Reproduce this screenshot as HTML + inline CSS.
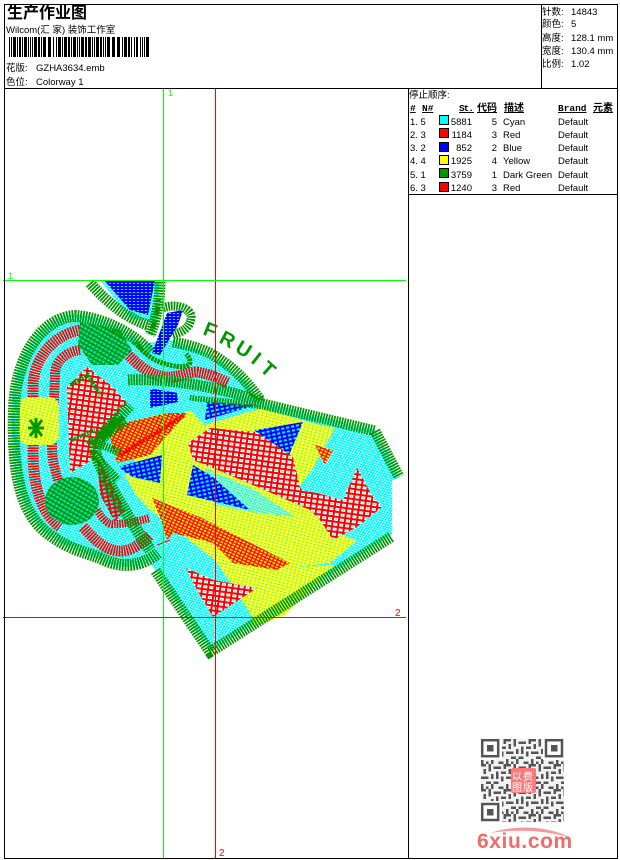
<!DOCTYPE html>
<html><head><meta charset="utf-8"><title>生产作业图</title>
<style>
html,body{margin:0;padding:0;background:#fff;width:620px;height:860px;overflow:hidden}
svg{display:block;position:absolute;left:0;top:0}
text{font-family:"Liberation Sans","WenQuanYi Zen Hei","Noto Sans CJK SC",sans-serif;font-size:9.5px;fill:#000}
.h{font-family:"Liberation Mono","WenQuanYi Zen Hei","Noto Sans CJK SC",monospace;font-weight:bold;font-size:9.5px}
.f{fill:none}
.g{fill:none;stroke:#009600;stroke-dasharray:1.7 1}
.k{fill:none;stroke:#009600;stroke-dasharray:2.5 .8}
.r{fill:none;stroke:#f00;stroke-dasharray:1.6 1}
.m{fill:none;stroke:#f00;stroke-dasharray:2.5 .8}
.q{font-size:10px;fill:#fff;font-family:"WenQuanYi Zen Hei","Noto Sans CJK SC",sans-serif}
.fr{font-size:20px;font-weight:bold;fill:#009600}
</style></head><body>
<svg width="620" height="860" viewBox="0 0 620 860" xmlns="http://www.w3.org/2000/svg">
<defs>
<pattern id="pc" width="4" height="3" patternUnits="userSpaceOnUse" patternTransform="rotate(-20)"><rect width="4" height="3" fill="#00ffff"/><rect x="0" y="0" width="2" height="1" fill="#fff"/><rect x="2" y="1.5" width="1.5" height="1" fill="#fff"/></pattern>
<pattern id="py" width="4" height="3" patternUnits="userSpaceOnUse" patternTransform="rotate(15)"><rect width="4" height="3" fill="#ffff00"/><rect x="0" y="0" width="1.5" height="1" fill="#00ffff"/><rect x="2" y="1.5" width="1" height="1" fill="#fff"/></pattern>
<pattern id="pr" width="6" height="5" patternUnits="userSpaceOnUse" patternTransform="rotate(8)"><rect width="6" height="5" fill="#f00"/><rect x="1" y="1" width="4" height="3" fill="#fff"/><rect x="2" y="2" width="2" height="1" fill="#00ffff"/></pattern>
<pattern id="pr2" width="4" height="3" patternUnits="userSpaceOnUse" patternTransform="rotate(25)"><rect width="4" height="3" fill="#f00"/><rect x=".8" y=".7" width="2.6" height="1.7" fill="#ffff00"/></pattern>
<pattern id="pr3" width="5" height="4" patternUnits="userSpaceOnUse" patternTransform="rotate(-10)"><rect width="5" height="4" fill="#f00"/><rect x="1" y="1" width="3" height="2" fill="#00ffff"/></pattern>
<pattern id="pb" width="5" height="4" patternUnits="userSpaceOnUse" patternTransform="rotate(-12)"><rect width="5" height="4" fill="#00f"/><rect x="1" y="1" width="3" height="2" fill="#00ffff"/></pattern>
<pattern id="pb2" width="4" height="3" patternUnits="userSpaceOnUse"><rect width="4" height="3" fill="#00f"/><rect x="1" y="1" width="2" height="1" fill="#00ffff"/></pattern>
<pattern id="pg" width="4" height="4" patternUnits="userSpaceOnUse" patternTransform="rotate(30)"><rect width="4" height="4" fill="#009600"/><rect x=".8" y=".8" width="2.9" height="2" fill="#00e8c8"/></pattern>
<pattern id="qr" width="25" height="25" patternUnits="userSpaceOnUse" x="481" y="739"><rect width="25" height="25" fill="#f2f2f2"/><g fill="#555"><rect x="0" y="0" width="5" height="2.5"/><rect x="7.5" y="0" width="2.5" height="7.5"/><rect x="12.5" y="2.5" width="7.5" height="2.5"/><rect x="22.5" y="0" width="2.5" height="5"/><rect x="2.5" y="5" width="2.5" height="5"/><rect x="15" y="7.5" width="2.5" height="7.5"/><rect x="20" y="7.5" width="5" height="2.5"/><rect x="0" y="12.5" width="7.5" height="2.5"/><rect x="10" y="10" width="2.5" height="5"/><rect x="20" y="12.5" width="2.5" height="5"/><rect x="5" y="17.5" width="5" height="2.5"/><rect x="12.5" y="17.5" width="5" height="2.5"/><rect x="0" y="20" width="2.5" height="5"/><rect x="10" y="20" width="2.5" height="5"/><rect x="17.5" y="22.5" width="5" height="2.5"/><rect x="5" y="22.5" width="2.5" height="2.5"/></g></pattern>
</defs>

<!-- embroidery: body -->
<polygon points="130,385 263,402 375,430 400,477 392,480 392,535 210,652 155,570 120,520 100,420" fill="url(#pc)"/>
<polygon points="158,423 190,410 205,425 262,408 312,423 335,428 312,470 297,490 312,512 345,536 357,541 330,563 295,567 253,617 215,560 150,510 122,480" fill="url(#py)"/>
<polygon points="205,468 255,490 295,517 250,512 215,505" fill="url(#pc)" opacity=".75"/>
<polygon points="295,567 335,565 285,615 250,628 262,590" fill="url(#py)"/>
<polygon points="207,402 257,405 205,420" fill="url(#pb)"/>
<polygon points="255,430 303,422 287,460 270,462" fill="url(#pb)"/>
<polygon points="193,465 213,477 250,510 187,495" fill="url(#pb)"/>
<polygon points="162,455 160,483 133,477 117,467" fill="url(#pb)"/>
<polygon points="150,390 176,385 178,402 150,408" fill="url(#pb2)"/>
<polygon points="188,443 210,428 257,432 293,457 300,487 307,497 310,510 260,488 213,468 193,460" fill="url(#pr)"/>
<polygon points="297,490 317,493 343,500 357,468 373,497 382,507 357,527 333,540 320,520 310,510" fill="url(#pr)"/>
<polygon points="315,445 333,450 325,465" fill="url(#pr2)"/>
<polygon points="186,568 213,580 257,588 213,617 197,590" fill="url(#pr)"/>
<polygon points="152,498 200,517 290,563 277,570 233,563 213,543 173,533 167,540 160,517" fill="url(#pr2)"/>
<polygon points="107,427 167,413 187,413 150,455 117,463" fill="url(#pr2)"/>
<path d="M120 455 L185 415" class="m" stroke-width="4"/>
<polyline points="125,540 150,548 170,540" class="f" stroke="#f00" stroke-width="1"/>
<!-- body outlines -->
<polyline points="190,395 263,404 375,431 399,477" class="g" stroke-width="11"/>
<polyline points="391,537 210,652 155,570" class="g" stroke-width="11"/>

<!-- leaf -->
<polygon points="100,280 160,280 155,322 130,318" fill="url(#pc)"/>
<polygon points="104,280 155,280 148,315 130,310" fill="url(#pb2)"/>
<path d="M90 283 C105 300,125 318,148 325" class="g" stroke-width="11"/>
<path d="M160 282 C160 295,158 315,150 335" class="g" stroke-width="11"/>
<path d="M158 300 C158 310,156 320,150 335" class="k" stroke-width="5"/>

<!-- apple -->
<path d="M150 350 C135 335,105 316,75 314 C40 316,12 360,12 410 C10 470,20 518,50 536 C70 550,85 552,100 560 C120 570,140 570,160 555 L150 520 L105 440 L130 390 Z" fill="url(#pc)"/>
<polygon points="130,345 173,340 213,355 247,382 262,402 190,395 130,385" fill="url(#pc)"/>
<path d="M80 330 C55 335,35 355,33 385 L33 450 C33 480,38 510,60 527" class="r" stroke-width="11"/>
<path d="M80 350 C65 352,55 362,55 375 L52 447 C52 460,55 470,58 480" class="r" stroke-width="10"/>
<path d="M83 527 C95 540,105 550,118 551 C130 552,140 545,150 535" class="r" stroke-width="11"/>
<path d="M97 510 C102 518,108 526,115 524 C125 524,135 522,150 518" class="r" stroke-width="8"/>
<path d="M123 350 C135 362,145 372,160 376 C175 380,185 372,197 372 C210 374,218 378,228 383" class="r" stroke-width="11"/>
<polygon points="67,387 87,367 113,387 127,403 100,437 97,457 70,473" fill="url(#pr)"/>
<polygon points="97,455 115,490 125,510 115,522 100,495" fill="url(#pr3)"/>
<path d="M70 385 L88 375 L100 395 M72 440 L95 430" class="g" stroke-width="4"/>
<polygon points="80,322 120,330 132,350 118,365 92,365 78,345" fill="url(#pg)"/>
<ellipse cx="72" cy="501" rx="27" ry="24" fill="url(#pg)"/>
<rect x="19" y="397" width="40" height="48" rx="10" fill="url(#py)"/>
<path d="M28 428 L44 428 M36 418 L36 438 M30 420 L42 436 M42 420 L30 436" fill="none" stroke="#009600" stroke-width="3"/>
<path d="M150 352 C135 335,105 318,75 316 C40 318,15 360,14 410 C12 470,20 515,50 535 C70 550,85 552,100 558 C120 568,140 568,158 553" class="g" stroke-width="12"/>
<path d="M173 342 C190 345,205 350,213 355 C230 365,245 378,260 400" class="g" stroke-width="11"/>
<path d="M135 342 C145 355,155 362,170 365 C180 368,190 367,190 362 C190 358,188 356,186 354" class="k" stroke-width="5"/>
<path d="M128 380 C160 378,215 385,262 402" class="g" stroke-width="11"/>
<path d="M125 420 C112 430,92 440,96 455 C105 480,130 520,150 550" class="g" stroke-width="12"/>
<path d="M100 437 L130 405" class="g" stroke-width="12"/>
<path d="M95 445 L118 418 M88 440 L120 452 M92 452 L118 480" class="g" stroke-width="8"/>
<!-- small leaf -->
<path d="M163 308 C175 303,192 308,191 318 C190 328,182 332,172 335" class="g" stroke-width="9"/>
<polygon points="167,313 183,310 178,325 160,355 152,353" fill="url(#pb2)"/>
<!-- FRUIT -->
<text transform="translate(202,334) rotate(22)" class="fr">F</text>
<text transform="translate(218,342) rotate(28)" class="fr">R</text>
<text transform="translate(234,351) rotate(32)" class="fr">U</text>
<text transform="translate(250,362) rotate(38)" class="fr">I</text>
<text transform="translate(259,370) rotate(42)" class="fr">T</text>

<!-- crosshair -->
<g shape-rendering="crispEdges">
<rect x="163" y="89" width="1" height="769" fill="#0f0"/>
<rect x="215" y="89" width="1" height="769" fill="#f00"/>
<rect x="3" y="280" width="403" height="1" fill="#0f0"/>
<rect x="3" y="617" width="403" height="1" fill="#f00"/>
</g>
<text x="168" y="96" style="fill:#0f0;font-size:9px">1</text>
<text x="8" y="279" style="fill:#0f0;font-size:9px">1</text>
<text x="395" y="616" style="fill:#f00;font-size:10px">2</text>
<text x="219" y="856" style="fill:#f00;font-size:10px">2</text>

<!-- frame -->
<g fill="#000" shape-rendering="crispEdges">
<rect x="4" y="4" width="614" height="1"/>
<rect x="4" y="4" width="1" height="855"/>
<rect x="617" y="4" width="1" height="855"/>
<rect x="4" y="858" width="614" height="1"/>
<rect x="4" y="88" width="614" height="1"/>
<rect x="541" y="4" width="1" height="84"/>
<rect x="408" y="88" width="1" height="770"/>
<rect x="408" y="194" width="210" height="1"/>
</g>

<!-- header -->
<text x="7" y="18" style="font-size:16px;font-weight:bold;font-family:'WenQuanYi Zen Hei','Noto Sans CJK SC',sans-serif">生产作业图</text>
<text x="6" y="33">Wilcom(汇 家) 装饰工作室</text>
<path fill="#000" shape-rendering="crispEdges" d="M9 37h1v20h-1zM11 37h1v20h-1zM13 37h3v20h-3zM17 37h1v20h-1zM19 37h2v20h-2zM22 37h1v20h-1zM24 37h3v20h-3zM28 37h1v20h-1zM30 37h1v20h-1zM32 37h1v20h-1zM34 37h3v20h-3zM38 37h2v20h-2zM41 37h1v20h-1zM43 37h3v20h-3zM48 37h3v20h-3zM53 37h1v20h-1zM56 37h1v20h-1zM58 37h3v20h-3zM62 37h1v20h-1zM64 37h3v20h-3zM68 37h2v20h-2zM71 37h1v20h-1zM73 37h3v20h-3zM77 37h1v20h-1zM79 37h1v20h-1zM81 37h3v20h-3zM85 37h2v20h-2zM88 37h3v20h-3zM92 37h1v20h-1zM94 37h1v20h-1zM96 37h3v20h-3zM100 37h2v20h-2zM103 37h1v20h-1zM105 37h1v20h-1zM107 37h3v20h-3zM112 37h3v20h-3zM117 37h3v20h-3zM122 37h1v20h-1zM124 37h3v20h-3zM128 37h2v20h-2zM131 37h1v20h-1zM134 37h1v20h-1zM136 37h2v20h-2zM140 37h1v20h-1zM142 37h1v20h-1zM144 37h1v20h-1zM146 37h3v20h-3z"/>
<text x="6" y="71">花版:</text><text x="36" y="71">GZHA3634.emb</text>
<text x="6" y="85">色位:</text><text x="36" y="85">Colorway 1</text>

<text x="542" y="15">针数:</text><text x="571" y="15">14843</text>
<text x="542" y="27">颜色:</text><text x="571" y="27">5</text>
<text x="542" y="41">高度:</text><text x="571" y="41">128.1 mm</text>
<text x="542" y="54">宽度:</text><text x="571" y="54">130.4 mm</text>
<text x="542" y="67">比例:</text><text x="571" y="67">1.02</text>

<!-- table -->
<text x="409" y="98">停止顺序:</text>
<g>
<text x="410" y="111" class="h" text-decoration="underline">#</text>
<text x="422" y="111" class="h" text-decoration="underline">N#</text>
<text x="459" y="111" class="h" textLength="15" lengthAdjust="spacing" text-decoration="underline">St.</text>
<text x="477" y="111" class="h" style="font-size:10px" text-decoration="underline">代码</text>
<text x="504" y="111" class="h" style="font-size:10px" text-decoration="underline">描述</text>
<text x="558" y="111" class="h" text-decoration="underline">Brand</text>
<text x="593" y="111" class="h" style="font-size:10px" text-decoration="underline">元素</text>
</g>
<g shape-rendering="crispEdges" stroke="#000" stroke-width="1">
<rect x="439.5" y="115.5" width="9" height="9" fill="#0ff"/>
<rect x="439.5" y="128.5" width="9" height="9" fill="#f00"/>
<rect x="439.5" y="142.5" width="9" height="9" fill="#00f"/>
<rect x="439.5" y="155.5" width="9" height="9" fill="#ff0"/>
<rect x="439.5" y="168.5" width="9" height="9" fill="#009600"/>
<rect x="439.5" y="182.5" width="9" height="9" fill="#f00"/>
</g>
<g>
<text x="410" y="125">1. 5</text><text x="472" y="125" text-anchor="end">5881</text><text x="497" y="125" text-anchor="end">5</text><text x="503" y="125">Cyan</text><text x="558" y="125">Default</text>
<text x="410" y="138">2. 3</text><text x="472" y="138" text-anchor="end">1184</text><text x="497" y="138" text-anchor="end">3</text><text x="503" y="138">Red</text><text x="558" y="138">Default</text>
<text x="410" y="151">3. 2</text><text x="472" y="151" text-anchor="end">852</text><text x="497" y="151" text-anchor="end">2</text><text x="503" y="151">Blue</text><text x="558" y="151">Default</text>
<text x="410" y="164">4. 4</text><text x="472" y="164" text-anchor="end">1925</text><text x="497" y="164" text-anchor="end">4</text><text x="503" y="164">Yellow</text><text x="558" y="164">Default</text>
<text x="410" y="178">5. 1</text><text x="472" y="178" text-anchor="end">3759</text><text x="497" y="178" text-anchor="end">1</text><text x="503" y="178">Dark Green</text><text x="558" y="178">Default</text>
<text x="410" y="191">6. 3</text><text x="472" y="191" text-anchor="end">1240</text><text x="497" y="191" text-anchor="end">3</text><text x="503" y="191">Red</text><text x="558" y="191">Default</text>
</g>

<!-- QR -->
<rect x="481" y="739" width="83" height="83" fill="url(#qr)"/>
<g fill="#fff"><rect x="481" y="739" width="21" height="21"/><rect x="543" y="739" width="21" height="21"/><rect x="481" y="801" width="21" height="21"/></g>
<g fill="none" stroke="#555" stroke-width="2.5"><rect x="482.2" y="740.2" width="16" height="16"/><rect x="546" y="740.2" width="16" height="16"/><rect x="482.2" y="804" width="16" height="16"/></g>
<g fill="#555"><rect x="487" y="745" width="6.5" height="6.5"/><rect x="551" y="745" width="6.5" height="6.5"/><rect x="487" y="809" width="6.5" height="6.5"/></g>
<rect x="511" y="768" width="25" height="25" rx="2" fill="#fa7a7a"/>
<text x="512" y="780" class="q">以</text><text x="523" y="780" class="q">费</text><text x="512" y="791" class="q">图</text><text x="523" y="791" class="q">版</text>
<path d="M490 833 C515 825,545 825,572 838 C545 830,515 829,490 833Z" fill="#f59a9a"/>
<text x="477" y="848" style="font-size:21px;font-weight:bold;fill:#f06b6b;letter-spacing:.6px">6xiu.com</text>
</svg>
</body></html>
